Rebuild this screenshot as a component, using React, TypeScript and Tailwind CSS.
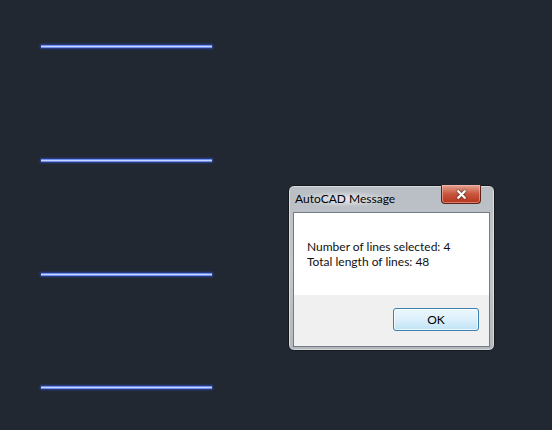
import { X } from "lucide-react";

const lineOffsets = ["mt-[45px]", "mt-[111px]", "mt-[111px]", "mt-[110px]"];

function GlowLine({ offset }: { offset: string }) {
  return (
    <div
      className={`${offset} h-[3px] w-[171px] bg-[#6f8ff0] shadow-[0_0_2px_1px_rgba(45,75,180,0.75)]`}
    >
      <div className="mt-[1px] h-[1px] w-full bg-[#c9d6ff]" />
    </div>
  );
}

function MessageBox() {
  return (
    <div className="absolute left-[288px] top-[185px] flex h-[166px] w-[207px] flex-col rounded-[6px] border border-[#15191e] bg-gradient-to-b from-[#b9bec4] via-[#c3c7cc] to-[#b2b7bd] px-[4px] pb-[3px] shadow-[inset_0_0_0_1px_rgba(255,255,255,0.45)]">
      {/* title bar */}
      <div className="flex h-[26px] items-start justify-between">
        <span className="mt-[5px] rounded-full bg-[radial-gradient(ellipse_at_center,rgba(235,238,241,0.9),rgba(235,238,241,0)_70%)] px-[2px] text-[12px] leading-[16px] text-black">
          AutoCAD Message
        </span>
        <button className="mr-[9px] -mt-[1px] flex h-[19px] w-[40px] items-center justify-center rounded-b-[4px] border border-t-0 border-[#5c2119] bg-gradient-to-b from-[#e3a393] via-[#c8553d] to-[#b7331c] shadow-[inset_0_0_0_1px_rgba(255,200,190,0.5)]">
          <X
            size={13}
            strokeWidth={4}
            className="text-white drop-shadow-[0_0_1px_#2a2a2a]"
          />
        </button>
      </div>
      {/* content */}
      <div className="flex flex-1 flex-col border border-[#737b85] bg-white">
        <div className="h-[82px] pl-[13px] pt-[26px] text-[12px] leading-[15px] text-[#111]">
          <p>Number of lines selected: 4</p>
          <p>Total length of lines: 48</p>
        </div>
        <div className="flex flex-1 justify-end bg-[#f0f0f0] pr-[10px] pt-[13px]">
          <button className="h-[23px] w-[86px] rounded-[3px] border border-[#3c7fb1] bg-gradient-to-b from-[#ecf7fd] via-[#dcf0fb] to-[#bfe3f6] text-[12px] text-black shadow-[inset_0_0_0_1px_rgba(255,255,255,0.7)]">
            OK
          </button>
        </div>
      </div>
    </div>
  );
}

export default function App() {
  return (
    <div
      className="relative h-[430px] w-[552px] overflow-hidden bg-[#222831]"
      style={{ fontFamily: 'Lato, "Open Sans", sans-serif' }}
    >
      <div className="flex flex-col pl-[41px]">
        {lineOffsets.map((o, i) => (
          <GlowLine key={i} offset={o} />
        ))}
      </div>
      <MessageBox />
    </div>
  );
}
